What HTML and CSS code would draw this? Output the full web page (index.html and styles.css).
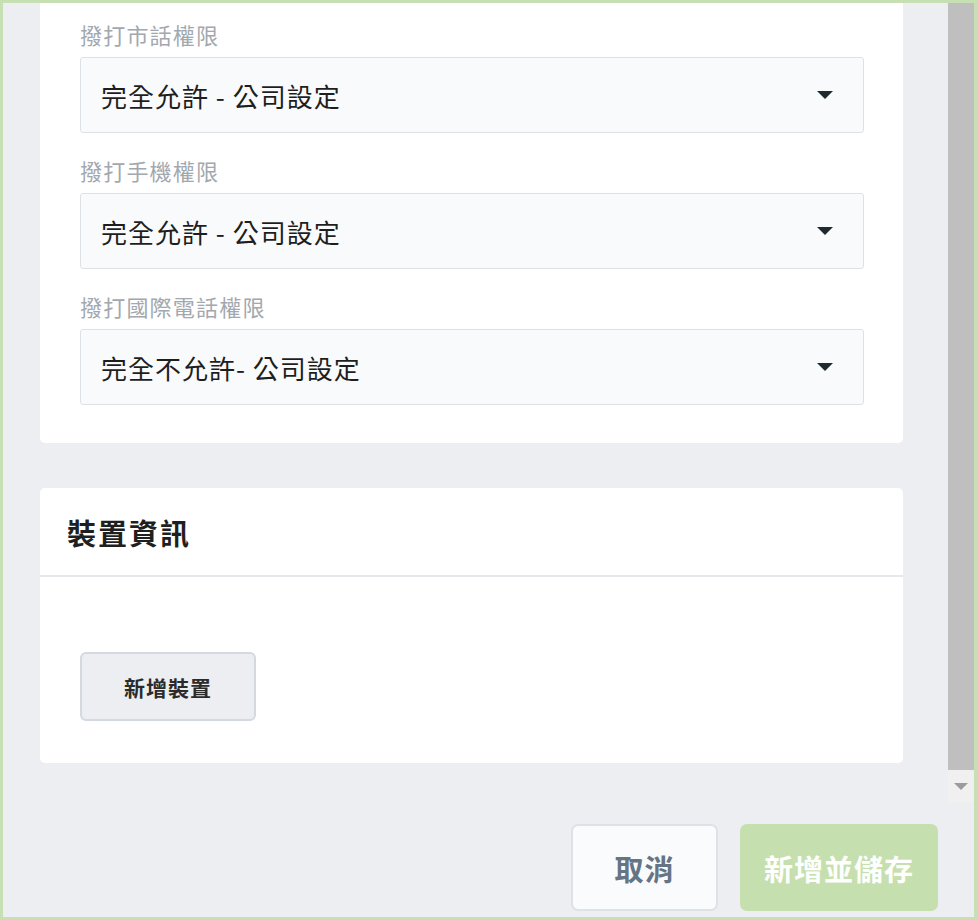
FILE: index.html
```html
<!DOCTYPE html>
<html lang="zh-Hant">
<head>
<meta charset="utf-8">
<title>新增分機</title>
<link rel="stylesheet" href="styles.css">
</head>
<body>
<div class="window">
  <div class="scroll-area">
    <div class="content">
      <section class="card card-cut">
        <div class="field">
          <div class="field-label">撥打市話權限</div>
          <div class="select">
            <span class="select-value">完全允許 - 公司設定</span>
            <span class="caret"></span>
          </div>
        </div>
        <div class="field">
          <div class="field-label">撥打手機權限</div>
          <div class="select">
            <span class="select-value">完全允許 - 公司設定</span>
            <span class="caret"></span>
          </div>
        </div>
        <div class="field">
          <div class="field-label">撥打國際電話權限</div>
          <div class="select">
            <span class="select-value">完全不允許- 公司設定</span>
            <span class="caret"></span>
          </div>
        </div>
      </section>

      <section class="card card-device">
        <header class="card-header">裝置資訊</header>
        <div class="card-body">
          <button class="btn-secondary" type="button">新增裝置</button>
        </div>
      </section>
    </div>
    <div class="scrollbar">
      <div class="scroll-thumb"></div>
      <div class="scroll-down"><span class="scroll-arrow"></span></div>
    </div>
  </div>
  <footer class="footer">
    <button class="btn-cancel" type="button">取消</button>
    <button class="btn-save" type="button">新增並儲存</button>
  </footer>
</div>
</body>
</html>
```

FILE: styles.css
```css
* {
  box-sizing: border-box;
}

html, body {
  margin: 0;
  padding: 0;
}

body {
  font-family: "Noto Sans CJK TC", "Noto Sans", sans-serif;
  background: #ffffff;
}

.window {
  width: 977px;
  height: 920px;
  border: 3px solid #c6e0b4;
  background: #eceef1;
  display: flex;
  flex-direction: column;
  overflow: hidden;
}

.scroll-area {
  height: 800px;
  display: flex;
  flex: none;
}

.content {
  flex: 1;
  padding: 0 45px 0 37px;
  overflow: hidden;
}

.card {
  background: #ffffff;
  border-radius: 5px;
}

.card-cut {
  border-top-left-radius: 0;
  border-top-right-radius: 0;
  padding: 17px 39px 38px 40px;
}

.field + .field {
  margin-top: 23px;
}

.field-label {
  font-size: 22px;
  line-height: 28px;
  color: #a2a8ae;
  letter-spacing: 1.2px;
  margin-bottom: 9px;
}

.select {
  height: 76px;
  border: 1px solid #dde2e6;
  border-radius: 3px;
  background: #f9fafb;
  display: flex;
  align-items: center;
  justify-content: space-between;
  padding: 0 30px 0 20px;
}

.select-value {
  font-size: 26px;
  color: #1e1e1e;
  letter-spacing: 1px;
}

.caret {
  width: 0;
  height: 0;
  border-left: 8px solid transparent;
  border-right: 8px solid transparent;
  border-top: 8px solid #1f2a30;
}

.card-device {
  margin-top: 45px;
}

.card-header {
  height: 89px;
  border-bottom: 2px solid #e6e8eb;
  display: flex;
  align-items: center;
  padding-left: 27px;
  font-size: 29px;
  font-weight: 700;
  color: #1f1f1f;
  letter-spacing: 2px;
}

.card-body {
  padding: 75px 40px 42px;
}

.btn-secondary {
  width: 176px;
  height: 69px;
  border: 2px solid #d3d9de;
  border-radius: 6px;
  background: #eceef1;
  font-family: inherit;
  font-size: 21px;
  font-weight: 700;
  color: #2b2b2b;
  letter-spacing: 1px;
  cursor: pointer;
}

.scrollbar {
  width: 26px;
  display: flex;
  flex-direction: column;
}

.scroll-thumb {
  flex: 1;
  background: #bfbfbf;
}

.scroll-down {
  height: 33px;
  background: #f0f0f1;
  display: flex;
  align-items: center;
  justify-content: center;
}

.scroll-arrow {
  width: 0;
  height: 0;
  border-left: 7px solid transparent;
  border-right: 7px solid transparent;
  border-top: 7px solid #9c9c9c;
}

.footer {
  flex: 1;
  display: flex;
  justify-content: flex-end;
  align-items: flex-start;
  gap: 22px;
  padding: 21px 36px 0 0;
}

.btn-cancel,
.btn-save {
  height: 87px;
  border-radius: 7px;
  font-family: inherit;
  font-size: 29px;
  font-weight: 700;
  letter-spacing: 1px;
}

.btn-cancel {
  width: 147px;
  border: 2px solid #dde2e6;
  background: #fafbfc;
  color: #657585;
}

.btn-save {
  width: 198px;
  border: none;
  background: #c6dfae;
  color: #ffffff;
}
```
